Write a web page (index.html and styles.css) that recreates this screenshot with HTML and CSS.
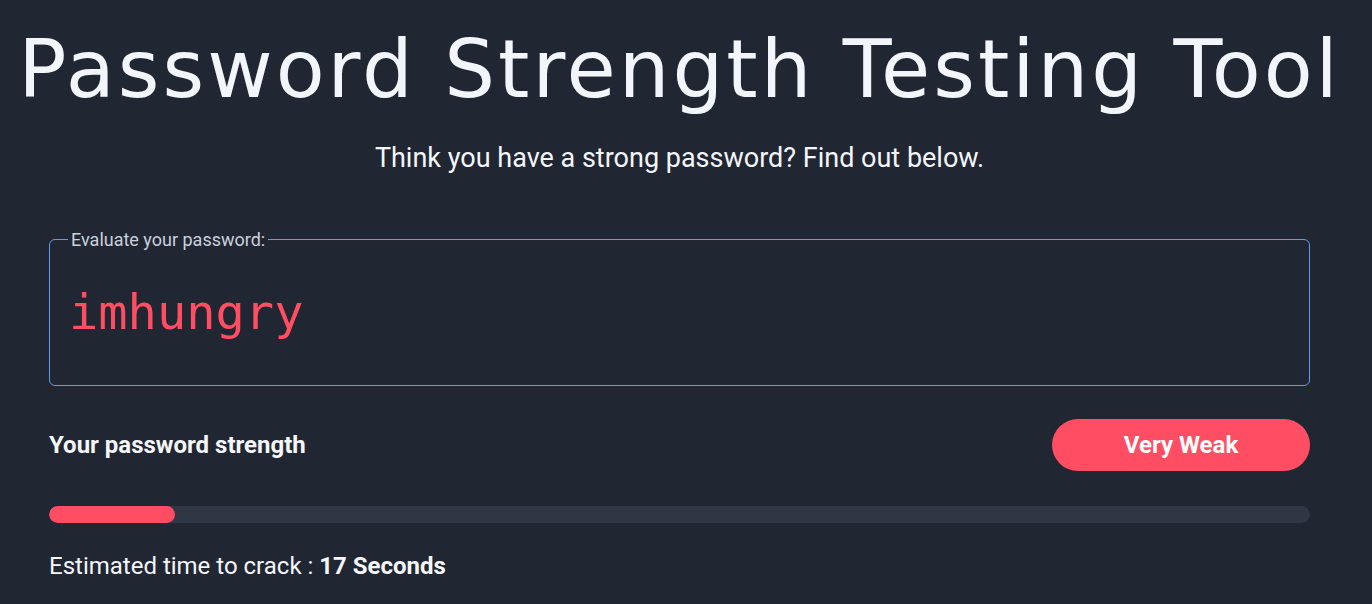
FILE: index.html
```html
<!DOCTYPE html>
<html lang="en">
<head>
<meta charset="utf-8">
<title>Password Strength Testing Tool</title>
<link rel="stylesheet" href="styles.css">
</head>
<body>
<main class="page">
  <h1 class="title">Password Strength Testing Tool</h1>
  <p class="subtitle">Think you have a strong password? Find out below.</p>
  <fieldset class="field">
    <legend class="field-legend">Evaluate your password:</legend>
    <div class="password">imhungry</div>
  </fieldset>
  <div class="strength-row">
    <span class="strength-label">Your password strength</span>
    <span class="badge">Very Weak</span>
  </div>
  <div class="bar"><div class="bar-fill" style="width:10%"></div></div>
  <p class="estimate">Estimated time to crack : <strong>17 Seconds</strong></p>
</main>
</body>
</html>
```
FILE: styles.css
```css
html, body {
  margin: 0;
  padding: 0;
  background: #212633;
  height: 100%;
  overflow: hidden;
}
body {
  font-family: Roboto, "Liberation Sans", sans-serif;
  color: #f4f6f9;
}
.page {
  margin: 0 62px 0 49px;
  display: flex;
  flex-direction: column;
}
.title {
  margin: 20px -40px 0 -40px;
  text-align: center;
  font-family: "DejaVu Sans", sans-serif;
  font-weight: 400;
  font-size: 80px;
  line-height: 100px;
  color: #f2f5f9;
  letter-spacing: 3px;
}
.subtitle {
  margin: 22px 0 0;
  text-align: center;
  font-size: 27px;
  line-height: 32px;
}
.field {
  margin: 55px 0 0;
  border-width: 1px;
  border-style: solid;
  border-color: #5e9cee;
  border-radius: 6px;
  padding: 34px 19px 45px;
  min-width: 0;
}
.field-legend {
  padding: 0 3px;
  margin-left: -1px;
  font-size: 18px;
  color: #c9d1dc;
}
.password {
  font-family: "DejaVu Sans Mono", monospace;
  font-size: 48.7px;
  line-height: 56px;
  color: #ff4d63;
}
.strength-row {
  margin-top: 33px;
  display: flex;
  align-items: center;
  justify-content: space-between;
}
.strength-label {
  font-size: 24px;
  font-weight: 700;
}
.badge {
  width: 258px;
  height: 52px;
  border-radius: 26px;
  background: #ff4d63;
  color: #fff;
  font-weight: 700;
  font-size: 24px;
  display: flex;
  align-items: center;
  justify-content: center;
}
.bar {
  margin-top: 35px;
  height: 17px;
  border-radius: 9px;
  background: #2f3744;
  overflow: hidden;
}
.bar-fill {
  height: 100%;
  border-radius: 9px;
  background: #ff4d63;
}
.estimate {
  margin: 28px 0 0;
  font-size: 24px;
  line-height: 30px;
}
.estimate strong {
  font-weight: 700;
}
```
